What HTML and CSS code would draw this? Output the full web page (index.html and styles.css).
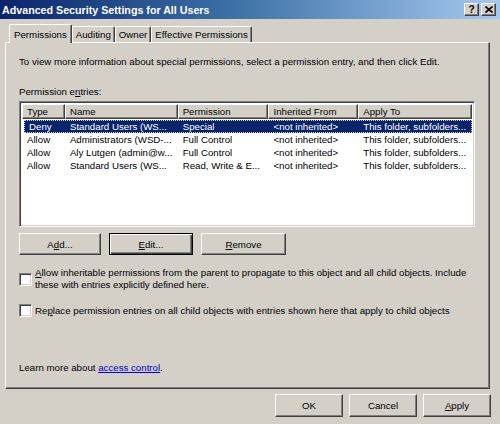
FILE: index.html
```html
<!DOCTYPE html>
<html>
<head>
<meta charset="utf-8">
<link rel="stylesheet" href="styles.css">
</head>
<body>
<div class="window">
  <div class="titlebar">
    <span class="title">Advanced Security Settings for All Users</span>
    <span class="tbtns">
      <span class="tbtn">?</span>
      <span class="tbtn x">
        <svg width="8" height="7" viewBox="0 0 8 7"><path d="M0.5 0.5 L7.5 6.5 M7.5 0.5 L0.5 6.5" stroke="#000" stroke-width="1.6"/></svg>
      </span>
    </span>
  </div>
  <div class="tabs">
    <div class="tab active">Permissions</div>
    <div class="tab">Auditing</div>
    <div class="tab">Owner</div>
    <div class="tab">Effective Permissions</div>
  </div>
  <div class="panel">
    <p class="intro">To view more information about special permissions, select a permission entry, and then click Edit.</p>
    <p class="label">Permission e<u>n</u>tries:</p>
    <div class="list">
      <div class="row head">
        <div class="c c1">Type</div>
        <div class="c c2">Name</div>
        <div class="c c3">Permission</div>
        <div class="c c4">Inherited From</div>
        <div class="c c5">Apply To</div>
      </div>
      <div class="row sel">
        <div class="c c1">Deny</div>
        <div class="c c2">Standard Users (WS...</div>
        <div class="c c3">Special</div>
        <div class="c c4">&lt;not inherited&gt;</div>
        <div class="c c5">This folder, subfolders...</div>
      </div>
      <div class="row">
        <div class="c c1">Allow</div>
        <div class="c c2">Administrators (WSD-...</div>
        <div class="c c3">Full Control</div>
        <div class="c c4">&lt;not inherited&gt;</div>
        <div class="c c5">This folder, subfolders...</div>
      </div>
      <div class="row">
        <div class="c c1">Allow</div>
        <div class="c c2">Aly Lutgen (admin@w...</div>
        <div class="c c3">Full Control</div>
        <div class="c c4">&lt;not inherited&gt;</div>
        <div class="c c5">This folder, subfolders...</div>
      </div>
      <div class="row">
        <div class="c c1">Allow</div>
        <div class="c c2">Standard Users (WS...</div>
        <div class="c c3">Read, Write &amp; E...</div>
        <div class="c c4">&lt;not inherited&gt;</div>
        <div class="c c5">This folder, subfolders...</div>
      </div>
    </div>
    <div class="btnrow">
      <span class="btn">A<u>d</u>d...</span>
      <span class="btn def"><u>E</u>dit...</span>
      <span class="btn"><u>R</u>emove</span>
    </div>
    <div class="check first">
      <span class="box"></span>
      <span class="ctext"><u>A</u>llow inheritable permissions from the parent to propagate to this object and all child objects. Include these with entries explicitly defined here.</span>
    </div>
    <div class="check">
      <span class="box"></span>
      <span class="ctext">Re<u>p</u>lace permission entries on all child objects with entries shown here that apply to child objects</span>
    </div>
    <p class="learn">Learn more about <span class="link">access control</span>.</p>
  </div>
  <div class="footer">
    <span class="btn wide">OK</span>
    <span class="btn wide">Cancel</span>
    <span class="btn wide"><u>A</u>pply</span>
  </div>
</div>
</body>
</html>
```
FILE: styles.css
```css
* { box-sizing: border-box; }
html, body { margin: 0; padding: 0; }
body {
  width: 500px;
  height: 424px;
  overflow: hidden;
  background: #d4d0c8;
  font-family: "Liberation Sans", Arial, sans-serif;
  font-size: 9.7px;
  color: #000;
}
.window {
  width: 500px;
  height: 424px;
  display: flex;
  flex-direction: column;
}
.titlebar {
  height: 19px;
  background: linear-gradient(to right, #0a246a 0%, #3a6ea5 45%, #a6caf0 100%);
  display: flex;
  align-items: center;
  justify-content: space-between;
  padding: 0 4px 0 2px;
}
.title {
  color: #fff;
  font-weight: bold;
  font-size: 10.7px;
}
.tbtns { display: flex; gap: 2px; }
.tbtn {
  width: 15px;
  height: 13px;
  background: #d4d0c8;
  border: 1px solid;
  border-color: #fff #404040 #404040 #fff;
  box-shadow: inset -1px -1px #808080;
  display: flex;
  align-items: center;
  justify-content: center;
  font-weight: bold;
  font-size: 10px;
  line-height: 1;
}
.tabs {
  display: flex;
  align-items: flex-end;
  height: 23px;
  padding-left: 9px;
  position: relative;
  z-index: 2;
}
.tab {
  height: 16px;
  padding: 0 3px;
  border-top: 1px solid #fff;
  border-left: 1px solid #fff;
  border-right: 1px solid #404040;
  border-radius: 2px 2px 0 0;
  box-shadow: inset -1px 0 #808080;
  display: flex;
  align-items: center;
}
.tab.active {
  height: 19px;
  margin-bottom: -1px;
  padding: 0 4px;
  background: #d4d0c8;
}
.panel {
  margin-left: 5px;
  width: 485px;
  height: 347px;
  border-top: 1px solid #fff;
  border-left: 1px solid #fff;
  border-right: 1px solid #404040;
  border-bottom: 1px solid #404040;
  box-shadow: inset -1px -1px #808080;
  padding: 0 14px 0 13px;
  display: flex;
  flex-direction: column;
}
p { margin: 0; }
.intro { margin-top: 12px; line-height: 13px; }
.label { margin-top: 17px; line-height: 13px; }
.list {
  margin-top: 3px;
  height: 126px;
  background: #fff;
  border: 1px solid;
  border-color: #808080 #fff #fff #808080;
  box-shadow: inset 1px 1px #404040, inset -1px -1px #d4d0c8;
  padding: 2px 2px 0 2px;
}
.row {
  display: flex;
  height: 13px;
  line-height: 13px;
  white-space: nowrap;
}
.c { padding-left: 5px; overflow: hidden; }
.c1 { width: 43px; }
.c2 { width: 113px; }
.c3 { width: 91px; }
.c4 { width: 90px; }
.c5 { width: 114px; }
.row.head { height: 15px; line-height: 13px; margin-bottom: 1px; }
.row.head .c {
  background: #d4d0c8;
  border-top: 1px solid #fff;
  border-left: 1px solid #fff;
  border-right: 1px solid #404040;
  border-bottom: 1px solid #404040;
  box-shadow: inset -1px -1px #808080;
  padding-left: 4px;
}
.row.sel {
  background: #0a246a;
  color: #fff;
  outline: 1px dotted #d4d0c8;
  outline-offset: -1px;
  margin-left: 2px;
}
.row.sel .c1 { width: 41px; }
.btnrow {
  margin-top: 6px;
  display: flex;
  gap: 8px;
}
.btn {
  height: 22px;
  width: 82px;
  display: flex;
  align-items: center;
  justify-content: center;
  background: #d4d0c8;
  border: 1px solid;
  border-color: #fff #404040 #404040 #fff;
  box-shadow: inset -1px -1px #808080;
}
.btn.def {
  border: 1px solid #000;
  box-shadow: inset 1px 1px #fff, inset -1px -1px #404040, inset -2px -2px #808080;
  width: 84px;
}
.btnrow .btn:last-child { width: 85px; }
.check {
  display: flex;
  align-items: center;
  margin-top: 13px;
}
.check.first { margin-top: 12px; }
.box {
  flex: none;
  width: 13px;
  height: 13px;
  background: #fff;
  border: 1px solid;
  border-color: #808080 #fff #fff #808080;
  box-shadow: inset 1px 1px #404040, inset -1px -1px #d4d0c8;
  margin-right: 3px;
}
.ctext { line-height: 12px; }
.learn { margin-top: 44px; line-height: 13px; }
.link { color: #0000cc; text-decoration: underline; }
.footer {
  display: flex;
  justify-content: flex-end;
  gap: 6px;
  padding-right: 9px;
  margin-top: 5px;
}
.btn.wide { width: 68px; height: 23px; }
```
